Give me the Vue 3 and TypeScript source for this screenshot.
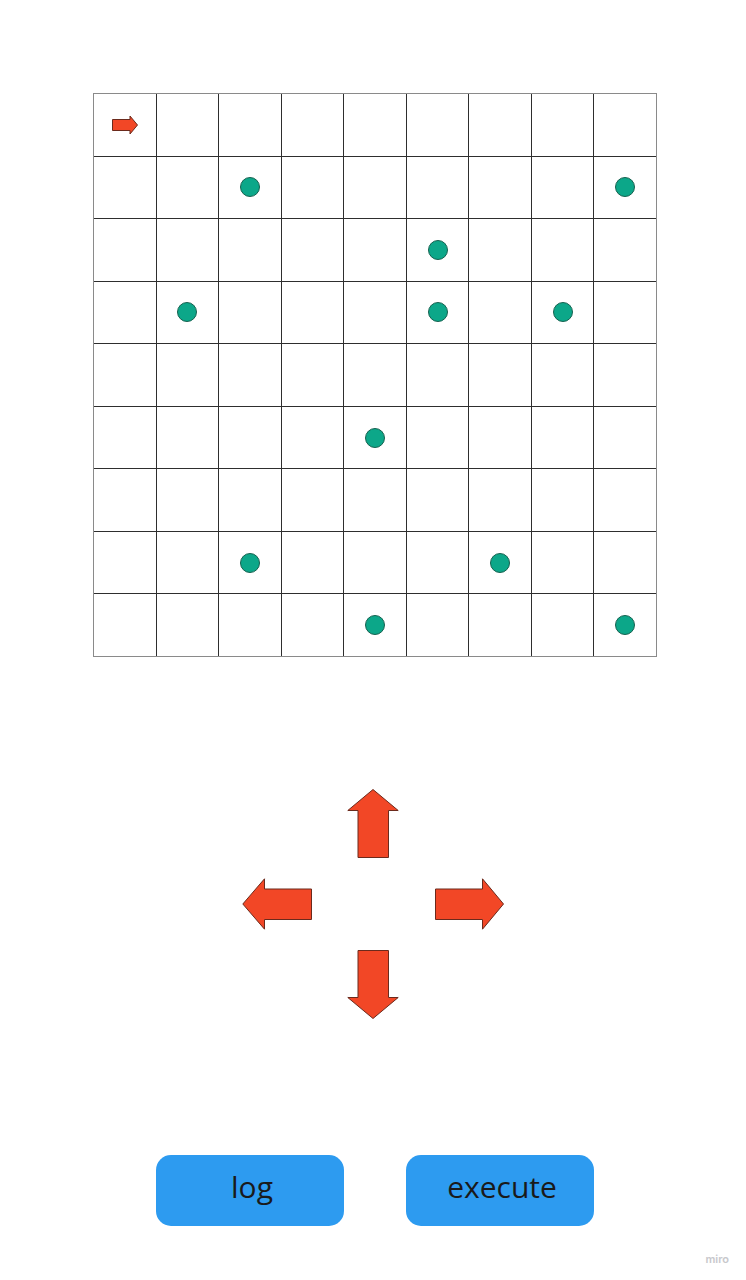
<script setup lang="ts">
type Direction = 'up' | 'left' | 'right' | 'down'

const SIZE = 9

const dots = new Set<string>([
  '1-2', '1-8', '2-5', '3-1', '3-5', '3-7', '5-4', '7-2', '7-6', '8-4', '8-8',
])

const player = '0-0'

const cells: string[] = Array.from(
  { length: SIZE * SIZE },
  (_, i) => `${Math.floor(i / SIZE)}-${i % SIZE}`,
)

const horizontal = '0 0 70 52'
const vertical = '0 0 52 70'

const arrows: { dir: Direction; box: string; points: string }[] = [
  { dir: 'up', box: vertical, points: '26,0.5 51.2,21.5 41.5,21.5 41.5,68.5 11,68.5 11,21.5 0.8,21.5' },
  { dir: 'left', box: horizontal, points: '0.8,26 22.5,0.8 22.5,11 69.5,11 69.5,41.5 22.5,41.5 22.5,51.2' },
  { dir: 'right', box: horizontal, points: '69.5,26 48.5,0.8 48.5,11 1.5,11 1.5,41.5 48.5,41.5 48.5,51.2' },
  { dir: 'down', box: vertical, points: '26,69.5 51.2,48.5 41.5,48.5 41.5,1.5 11,1.5 11,48.5 0.8,48.5' },
]
</script>

<template>
  <main class="page">
    <section class="board" aria-label="Board">
      <div v-for="cell in cells" :key="cell" class="cell">
        <svg v-if="cell === player" class="player" viewBox="0 0 26 20">
          <polygon points="0.5,4.5 18,4.5 18,1 25.5,10 18,19 18,15.5 0.5,15.5" />
        </svg>
        <span v-else-if="dots.has(cell)" class="dot"></span>
      </div>
    </section>

    <nav class="pad" aria-label="Directions">
      <button
        v-for="arrow in arrows"
        :key="arrow.dir"
        type="button"
        class="arrow"
        :class="arrow.dir"
        :aria-label="arrow.dir"
      >
        <svg :viewBox="arrow.box"><polygon :points="arrow.points" /></svg>
      </button>
    </nav>

    <div class="actions">
      <button type="button" class="action">log</button>
      <button type="button" class="action">execute</button>
    </div>

    <footer class="brand">miro</footer>
  </main>
</template>

<style>
body {
  margin: 0;
  background: #fff;
}
</style>

<style scoped>
.page {
  box-sizing: border-box;
  min-height: 100vh;
  display: flex;
  flex-direction: column;
  padding-top: 93px;
  font-family: "Open Sans", "Noto Sans", sans-serif;
  color: #1a1a1a;
}

.board {
  box-sizing: border-box;
  aspect-ratio: 1;
  margin: 0 89px 0 93px;
  display: grid;
  grid-template-columns: repeat(9, minmax(0, 1fr));
  grid-template-rows: repeat(9, minmax(0, 1fr));
  gap: 1px;
  border: 1px solid #8a8a8a;
  background: #2e2e2e;
}

.cell {
  display: flex;
  align-items: center;
  justify-content: center;
  background: #fff;
}

.dot {
  box-sizing: border-box;
  width: 20px;
  height: 20px;
  border: 1px solid #16614f;
  border-radius: 50%;
  background: #0ca789;
}

polygon {
  fill: #f24726;
  stroke: #6b2a1c;
  stroke-width: 1;
}

.player {
  width: 26px;
  height: 20px;
}

.pad {
  align-self: center;
  margin-top: 132px;
  display: grid;
  grid-template-columns: 70px 122px 70px;
  grid-template-rows: 70px 52px 70px;
  row-gap: 19px;
  grid-template-areas:
    ". up ."
    "left . right"
    ". down .";
}

.arrow {
  display: flex;
  justify-content: center;
  padding: 0;
  border: 0;
  background: none;
  cursor: pointer;
}

.arrow svg {
  width: 70px;
  height: 52px;
}

.up svg,
.down svg {
  width: 52px;
  height: 70px;
}

.up {
  grid-area: up;
  justify-self: center;
}

.left {
  grid-area: left;
}

.right {
  grid-area: right;
}

.down {
  grid-area: down;
  justify-self: center;
}

.actions {
  margin: 136px 152px 0 156px;
  display: grid;
  grid-template-columns: 1fr 1fr;
  gap: 62px;
}

.action {
  height: 71px;
  padding: 0 0 8px 4px;
  border: 0;
  border-radius: 15px;
  background: #2d9bf0;
  color: #1a1a1a;
  font-family: inherit;
  font-size: 30px;
  line-height: 40px;
  cursor: pointer;
}

.brand {
  margin-top: auto;
  padding: 0 17px 13px 0;
  text-align: right;
  font-family: Inter, sans-serif;
  font-size: 11px;
  font-weight: 600;
  line-height: 16px;
  color: #c8c8cc;
}
</style>
